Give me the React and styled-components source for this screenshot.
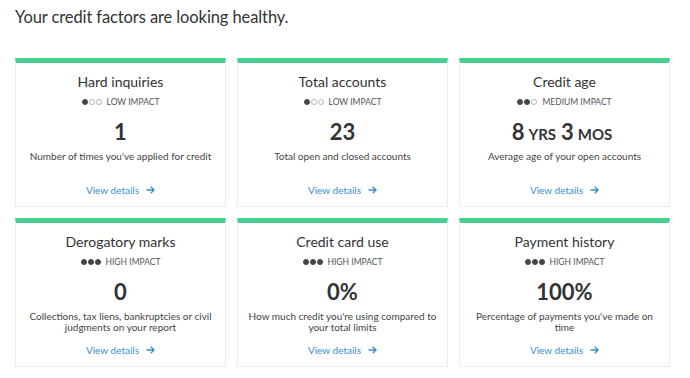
import React from "react";
import styled, { createGlobalStyle } from "styled-components";

const Global = createGlobalStyle`
  html, body { margin: 0; padding: 0; background: #fff; }
  body { font-family: "Lato", "Noto Sans", sans-serif; color: #333; }
`;

const Page = styled.div`
  width: 690px;
  height: 378px;
  padding: 7px 0 0 15px;
  box-sizing: border-box;
`;

const Heading = styled.h1`
  margin: 0;
  font-size: 16.5px;
  line-height: 20px;
  font-weight: 400;
  color: #333;
  letter-spacing: -0.1px;
`;

const Grid = styled.div`
  margin-top: 31px;
  display: grid;
  grid-template-columns: repeat(3, 211px);
  grid-auto-rows: 149px;
  column-gap: 11px;
  row-gap: 11px;
`;

const Card = styled.div`
  box-sizing: border-box;
  border: 1px solid #ececec;
  border-top: 5px solid #45d08f;
  display: flex;
  flex-direction: column;
  align-items: center;
  text-align: center;
  padding: 10px 6px 10px;
`;

const Title = styled.div`
  font-size: 14px;
  line-height: 17px;
  color: #333;
`;

const Impact = styled.div`
  margin-top: 6px;
  display: flex;
  align-items: center;
  gap: 5px;
  font-size: 8.5px;
  line-height: 12px;
  color: #555;
  text-transform: uppercase;
`;

const Dots = styled.span`
  display: inline-flex;
  gap: 1px;
`;

const Dot = styled.span`
  width: 6px;
  height: 6px;
  box-sizing: border-box;
  border-radius: 50%;
  background: ${(p) => (p.$on ? "#444" : "#fff")};
  border: 1px solid ${(p) => (p.$on ? "#444" : "#b5b5b5")};
`;

const Value = styled.div`
  margin-top: 11px;
  font-size: 22px;
  line-height: 26px;
  height: 26px;
  font-weight: 700;
  color: #333;
`;

const Unit = styled.span`
  font-size: 15px;
  line-height: 1;
  text-transform: uppercase;
  margin: 0 5px 0 4px;
`;

const Desc = styled.div`
  margin-top: 6px;
  font-size: 10px;
  line-height: 11px;
  color: #444;
`;

const Link = styled.a`
  margin-top: auto;
  display: inline-flex;
  align-items: center;
  gap: 7px;
  font-size: 10px;
  line-height: 12px;
  color: #3a8bd2;
  text-decoration: none;
`;

const Arrow = () => (
  <svg width="9" height="8" viewBox="0 0 9 8" fill="none">
    <path d="M0.5 4H8M4.8 0.8L8 4L4.8 7.2" stroke="#3a8bd2" strokeWidth="1.3" />
  </svg>
);

const cards = [
  { title: "Hard inquiries", level: 1, impact: "Low impact", value: "1", desc: "Number of times you've applied for credit" },
  { title: "Total accounts", level: 1, impact: "Low impact", value: "23", desc: "Total open and closed accounts" },
  { title: "Credit age", level: 2, impact: "Medium impact", value: "age", desc: "Average age of your open accounts" },
  { title: "Derogatory marks", level: 3, impact: "High impact", value: "0", desc: "Collections, tax liens, bankruptcies or civil judgments on your report" },
  { title: "Credit card use", level: 3, impact: "High impact", value: "0%", desc: "How much credit you're using compared to your total limits" },
  { title: "Payment history", level: 3, impact: "High impact", value: "100%", desc: "Percentage of payments you've made on time" },
];

export default function App() {
  return (
    <Page>
      <Global />
      <Heading>Your credit factors are looking healthy.</Heading>
      <Grid>
        {cards.map((c) => (
          <Card key={c.title}>
            <Title>{c.title}</Title>
            <Impact>
              <Dots>
                {[1, 2, 3].map((i) => (
                  <Dot key={i} $on={i <= c.level} />
                ))}
              </Dots>
              {c.impact}
            </Impact>
            <Value>
              {c.value === "age" ? (
                <>
                  8<Unit>yrs</Unit>3<Unit>mos</Unit>
                </>
              ) : (
                c.value
              )}
            </Value>
            <Desc>{c.desc}</Desc>
            <Link href="#">
              View details <Arrow />
            </Link>
          </Card>
        ))}
      </Grid>
    </Page>
  );
}
